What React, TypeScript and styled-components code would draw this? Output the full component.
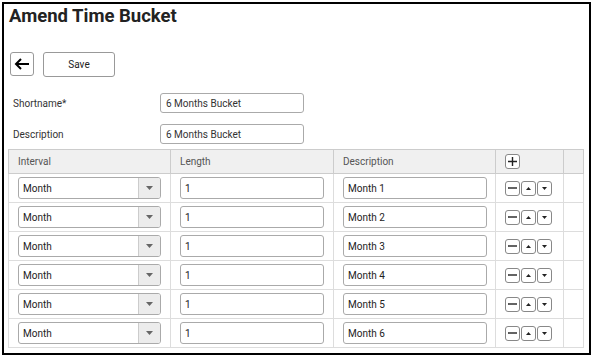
import styled, { createGlobalStyle } from 'styled-components'

const GlobalStyle = createGlobalStyle`
	body {
		margin: 0;
		background: #fff;
		font-family: Roboto, "Liberation Sans", Arial, sans-serif;
		color: #333;
	}
`

const rows = [1, 2, 3, 4, 5, 6]

const App = () => {
	return (
		<>
			<GlobalStyle />
			<Frame>
				<Title>Amend Time Bucket</Title>
				<Toolbar>
					<BackButton aria-label="Back">
						<svg width="16" height="12" viewBox="0 0 16 12">
							<path d="M15 6H2M7 1L2 6l5 5" fill="none" stroke="#000" strokeWidth="2" />
						</svg>
					</BackButton>
					<SaveButton>Save</SaveButton>
				</Toolbar>
				<FormRow>
					<Label>Shortname*</Label>
					<TextInput defaultValue="6 Months Bucket" />
				</FormRow>
				<FormRow>
					<Label>Description</Label>
					<TextInput defaultValue="6 Months Bucket" />
				</FormRow>
				<Table>
					<colgroup>
						<col style={{ width: 162 }} />
						<col style={{ width: 163 }} />
						<col style={{ width: 162 }} />
						<col style={{ width: 68 }} />
						<col style={{ width: 20 }} />
					</colgroup>
					<thead>
						<tr>
							<Th>Interval</Th>
							<Th>Length</Th>
							<Th>Description</Th>
							<Th>
								<IconButton>
									<svg width="9" height="9" viewBox="0 0 9 9">
										<path d="M4.5 0v9M0 4.5h9" stroke="#222" strokeWidth="1.4" />
									</svg>
								</IconButton>
							</Th>
							<Th />
						</tr>
					</thead>
					<tbody>
						{rows.map((n) => (
							<tr key={n}>
								<Td>
									<Select>
										<SelectValue>Month</SelectValue>
										<SelectArrow>
											<svg width="7" height="4" viewBox="0 0 7 4">
												<path d="M0 0h7L3.5 4z" fill="#666" />
											</svg>
										</SelectArrow>
									</Select>
								</Td>
								<Td>
									<CellInput defaultValue="1" />
								</Td>
								<Td>
									<CellInput defaultValue={`Month ${n}`} />
								</Td>
								<Td>
									<Actions>
										<IconButton>
											<svg width="9" height="2" viewBox="0 0 9 2">
												<path d="M0 1h9" stroke="#222" strokeWidth="1.4" />
											</svg>
										</IconButton>
										<IconButton>
											<svg width="5" height="3" viewBox="0 0 5 3">
												<path d="M0 3h5L2.5 0z" fill="#222" />
											</svg>
										</IconButton>
										<IconButton>
											<svg width="5" height="3" viewBox="0 0 5 3">
												<path d="M0 0h5L2.5 3z" fill="#222" />
											</svg>
										</IconButton>
									</Actions>
								</Td>
								<Td />
							</tr>
						))}
					</tbody>
				</Table>
			</Frame>
		</>
	)
}

export default App

const Frame = styled.div`
	box-sizing: border-box;
	margin: 2px 0 0 2px;
	width: 589px;
	height: 353px;
	border: 2px solid #000;
	padding: 0 4px;
`

const Title = styled.h1`
	margin: 0;
	padding: 0 0 0 1px;
	font-size: 18.5px;
	font-weight: 700;
	color: #222;
	line-height: 24px;
`

const Toolbar = styled.div`
	display: flex;
	gap: 9px;
	margin: 24px 0 0 2px;
	height: 25px;
`

const BackButton = styled.button`
	box-sizing: border-box;
	width: 24px;
	height: 24px;
	padding: 0;
	display: flex;
	align-items: center;
	justify-content: center;
	background: #fff;
	border: 1px solid #999;
	border-radius: 3px;
`

const SaveButton = styled.button`
	box-sizing: border-box;
	width: 72px;
	height: 25px;
	background: #fff;
	border: 1px solid #999;
	border-radius: 3px;
	font-family: Roboto, "Liberation Sans", Arial, sans-serif;
	font-size: 10px;
	color: #222;
`

const FormRow = styled.div`
	display: flex;
	align-items: center;
	height: 20px;
	margin-top: 16px;
	& + & {
		margin-top: 11px;
	}
`

const Label = styled.div`
	width: 152px;
	padding-left: 5px;
	box-sizing: border-box;
	font-size: 10px;
	color: #333;
`

const TextInput = styled.input`
	box-sizing: border-box;
	width: 144px;
	height: 20px;
	padding: 0 5px;
	border: 1px solid #aaa;
	border-radius: 3px;
	font-family: Roboto, "Liberation Sans", Arial, sans-serif;
	font-size: 10px;
	color: #333;
`

const Table = styled.table`
	margin-top: 5px;
	width: 575px;
	border-collapse: collapse;
	border: 1px solid #ccc;
	table-layout: fixed;
`

const Th = styled.th`
	height: 23px;
	padding: 0 0 0 9px;
	background: #f0f0f0;
	border: 1px solid #ccc;
	text-align: left;
	font-size: 10px;
	font-weight: 400;
	color: #555;
`

const Td = styled.td`
	height: 28px;
	padding: 0 0 0 9px;
	border: 1px solid #ddd;
`

const Select = styled.div`
	box-sizing: border-box;
	display: flex;
	width: 143px;
	height: 22px;
	border: 1px solid #aaa;
	border-radius: 3px;
	overflow: hidden;
`

const SelectValue = styled.div`
	flex: 1;
	display: flex;
	align-items: center;
	padding-left: 4px;
	font-size: 10px;
	color: #222;
`

const SelectArrow = styled.div`
	width: 21px;
	display: flex;
	align-items: center;
	justify-content: center;
	background: #ececec;
	border-left: 1px solid #ccc;
`

const CellInput = styled.input`
	box-sizing: border-box;
	width: 144px;
	height: 22px;
	padding: 0 4px;
	border: 1px solid #aaa;
	border-radius: 3px;
	font-family: Roboto, "Liberation Sans", Arial, sans-serif;
	font-size: 10px;
	color: #222;
`

const Actions = styled.div`
	display: flex;
	gap: 1px;
`

const IconButton = styled.button`
	box-sizing: border-box;
	width: 15px;
	height: 15px;
	padding: 0;
	display: flex;
	align-items: center;
	justify-content: center;
	background: #fff;
	border: 1px solid #888;
	border-radius: 3px;
`
